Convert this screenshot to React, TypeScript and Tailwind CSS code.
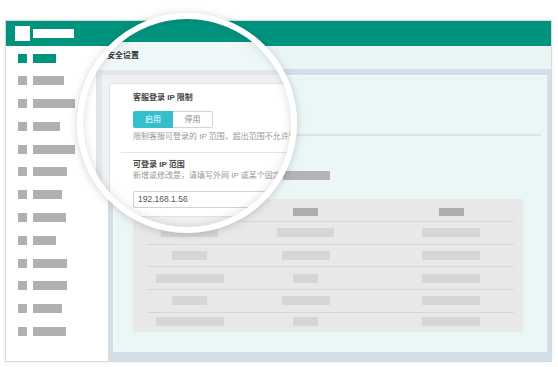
const FONT = { fontFamily: '"Liberation Sans", "Noto Sans CJK SC", sans-serif' };

const NAV = [
  { w: 'w-[23px]', on: true },
  { w: 'w-[31px]' },
  { w: 'w-[42px]' },
  { w: 'w-[27px]' },
  { w: 'w-[42px]' },
  { w: 'w-[34px]' },
  { w: 'w-[29px]' },
  { w: 'w-[33px]' },
  { w: 'w-[23px]' },
  { w: 'w-[34px]' },
  { w: 'w-[34px]' },
  { w: 'w-[29px]' },
  { w: 'w-[33px]' },
];

// bar widths per table row: [col1, col2, col3]
const ROWS = [
  ['w-[57px]', 'w-[57px]', 'w-[58px]'],
  ['w-[35px]', 'w-[48px]', 'w-[58px]'],
  ['w-[68px]', 'w-[25px]', 'w-[58px]'],
  ['w-[35px]', 'w-[48px]', 'w-[58px]'],
  ['w-[68px]', 'w-[25px]', 'w-[58px]'],
];

function Sidebar() {
  return (
    <aside className="flex w-[102px] shrink-0 flex-col gap-[13.8px] bg-white pl-[12px] pt-[7.5px]">
      {NAV.map((item, i) => (
        <div key={i} className="flex h-[9px] items-center gap-[6px]">
          <div className={`h-[9px] w-[9px] ${item.on ? 'bg-[#00947f]' : 'bg-[#b0b0b0]'}`} />
          <div className={`h-[9px] ${item.w} ${item.on ? 'bg-[#00947f]' : 'bg-[#b0b0b0]'}`} />
        </div>
      ))}
    </aside>
  );
}

function Table() {
  return (
    <div className="ml-[19px] mt-[19px] h-[133px] w-[390px] overflow-hidden bg-[#e8e8e8] pl-[14px] pr-[9px]">
      <div className="grid h-[23px] grid-cols-[85px_147px_144px] items-center border-b border-[#d6d6d6] pt-[4px]">
        <div className="flex justify-center"><div className="h-[8px] w-[25px] bg-[#adadad]" /></div>
        <div className="flex justify-center"><div className="h-[8px] w-[25px] bg-[#adadad]" /></div>
        <div className="flex justify-center"><div className="h-[8px] w-[25px] bg-[#adadad]" /></div>
      </div>
      {ROWS.map((r, i) => (
        <div
          key={i}
          className={`grid grid-cols-[85px_147px_144px] items-center ${i < 4 ? 'h-[22.7px] border-b border-[#d6d6d6]' : 'h-[18px]'}`}
        >
          {r.map((w, j) => (
            <div key={j} className="flex justify-center">
              <div className={`h-[9px] ${w} bg-[#d6d6d6]`} />
            </div>
          ))}
        </div>
      ))}
    </div>
  );
}

function Magnified() {
  return (
    <div className="absolute left-[-83px] top-[-19px] h-[367px] w-[558px] bg-white" style={FONT}>
      <div className="h-[42px] bg-[#00947f]" />
      <div className="flex h-[325px]">
        <div className="w-[97px] shrink-0 border-r border-[#e0e4e6] bg-white" />
        <div className="flex flex-1 flex-col">
          <div className="flex h-[28px] items-center bg-[#eef8f8] pl-[10px] text-[8px] font-bold text-[#333]">
            安全设置
          </div>
          <div className="flex-1 bg-[#e2e7ea] pl-[5px] pt-[5px]">
            <div className="h-full bg-[#eff1f2] pl-[7px] pt-[8px]">
              <div className="w-[300px] rounded-[3px] border border-[#e2e2e2] bg-white px-[11px] pb-[8px]">
                <div className="pb-[9.5px] pl-[12px] pt-[8px]">
                  <div className="text-[8px] font-bold leading-[11px] text-[#444]">客服登录 IP 限制</div>
                  <div className="mt-[8px] flex h-[17px] w-[80px] text-[8px]">
                    <div className="flex w-[40px] items-center justify-center rounded-l-[2px] bg-[#35bfcd] text-white">启用</div>
                    <div className="flex w-[40px] items-center justify-center rounded-r-[2px] border border-l-0 border-[#d4d4d4] text-[#888]">
                      停用
                    </div>
                  </div>
                  <div className="mt-[3px] whitespace-nowrap text-[8px] leading-[11px] text-[#9a9a9a]">
                    限制客服可登录的 IP 范围，超出范围不允许登录
                  </div>
                </div>
                <div className="border-t border-[#e4e4e4] pl-[12px] pt-[6px]">
                  <div className="text-[8px] font-bold leading-[11px] text-[#444]">可登录 IP 范围</div>
                  <div className="whitespace-nowrap text-[8px] leading-[11px] text-[#9a9a9a]">
                    新增或修改是，请填写外网 IP 或某个固定IP段
                  </div>
                  <div className="mt-[10px] flex h-[17px] w-[250px] items-center rounded-[2px] border border-[#d2d2d2] pl-[4px] text-[8.5px] text-[#555]">
                    192.168.1.56
                  </div>
                </div>
              </div>
            </div>
          </div>
        </div>
      </div>
    </div>
  );
}

export default function App() {
  return (
    <div className="relative h-[367px] w-[558px] overflow-hidden bg-white" style={FONT}>
      <div className="ml-[5px] mt-[20px] flex h-[342px] w-[547px] flex-col border border-[#d9d9d9] shadow-[0_0_4px_rgba(0,0,0,0.08)]">
        <header className="flex h-[25px] shrink-0 items-center gap-[3px] bg-[#00947f] pl-[9px]">
          <div className="h-[15px] w-[15px] bg-white" />
          <div className="h-[9px] w-[41px] bg-white" />
        </header>
        <div className="flex flex-1">
          <Sidebar />
          <main className="flex flex-1 flex-col">
            <div className="h-[23px] bg-[#eaf6f6]" />
            <div className="flex-1 bg-[#d4dee6] pb-[9px] pl-[5px] pr-[4px] pt-[6px]">
              <div className="h-full border border-[#f2f9f9] bg-[#ebf6f6] pt-[58px]">
                <div className="ml-[20px] mr-[5px] h-[2px] bg-[#dbe3e3]" />
                <div className="ml-[169px] mt-[35px] h-[9px] w-[47px] bg-[#b3b3b3]" />
                <Table />
              </div>
            </div>
          </main>
        </div>
      </div>

      {/* magnifier lens over the page */}
      <div className="absolute left-[77px] top-[13px] h-[220px] w-[220px] overflow-hidden rounded-full border-[6px] border-white shadow-[0_1px_8px_rgba(0,0,0,0.18)]">
        <Magnified />
        <div className="absolute inset-0 rounded-full shadow-[inset_0_0_10px_rgba(0,0,0,0.14)]" />
      </div>
    </div>
  );
}
